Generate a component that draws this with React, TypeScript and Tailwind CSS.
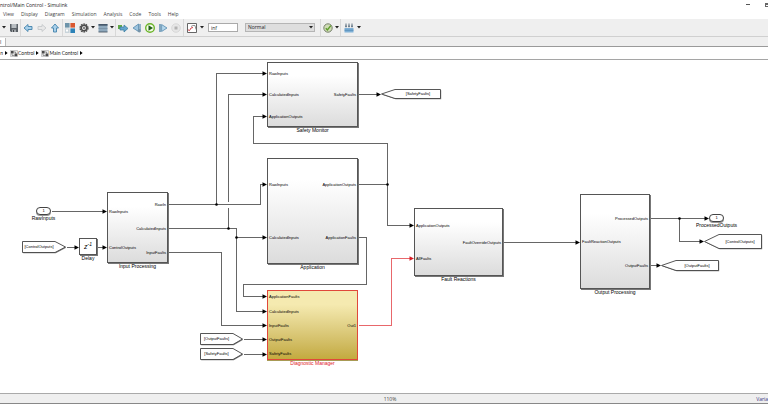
import React from 'react';

type Port = { name: string; y: number };

type Block = {
  name: string;
  x: number;
  y: number;
  w: number;
  h: number;
  inputs: Port[];
  outputs: Port[];
  selected?: boolean;
};

type Tag = {
  name: string;
  x: number;
  y: number;
  w: number;
  h: number;
  tip: number;
  side: 'left' | 'right';
};

const blocks: Block[] = [
  {
    name: 'Input Processing', x: 107, y: 132, w: 61, h: 71,
    inputs: [{ name: 'RawInputs', y: 151 }, { name: 'ControlOutputs', y: 187 }],
    outputs: [{ name: 'RawIn', y: 144 }, { name: 'CalculatedInputs', y: 168 }, { name: 'InputFaults', y: 192 }],
  },
  {
    name: 'Safety Monitor', x: 267, y: 2, w: 91, h: 65,
    inputs: [{ name: 'RawInputs', y: 13 }, { name: 'CalculatedInputs', y: 34 }, { name: 'ApplicationOutputs', y: 56 }],
    outputs: [{ name: 'SafetyFaults', y: 34 }],
  },
  {
    name: 'Application', x: 267, y: 98, w: 91, h: 106,
    inputs: [{ name: 'RawInputs', y: 124 }, { name: 'CalculatedInputs', y: 177 }],
    outputs: [{ name: 'ApplicationOutputs', y: 124 }, { name: 'ApplicationFaults', y: 177 }],
  },
  {
    name: 'Diagnostic Manager', x: 267, y: 230, w: 91, h: 70, selected: true,
    inputs: [
      { name: 'ApplicationFaults', y: 236 },
      { name: 'CalculatedInputs', y: 251 },
      { name: 'InputFaults', y: 265 },
      { name: 'OutputFaults', y: 279 },
      { name: 'SafetyFaults', y: 293 },
    ],
    outputs: [{ name: 'Out1', y: 265 }],
  },
  {
    name: 'Fault Reactions', x: 414, y: 148, w: 89, h: 68,
    inputs: [{ name: 'ApplicationOutputs', y: 165 }, { name: 'AllFaults', y: 198 }],
    outputs: [{ name: 'FaultOverrideOutputs', y: 182 }],
  },
  {
    name: 'Output Processing', x: 580, y: 134, w: 70, h: 95,
    inputs: [{ name: 'FaultReactionOutputs', y: 181 }],
    outputs: [{ name: 'ProcessedOutputs', y: 158 }, { name: 'OutputFaults', y: 205 }],
  },
];

const tags: Tag[] = [
  { name: '[ControlOutputs]', x: 22, y: 181, w: 44, h: 12, tip: 11, side: 'right' },
  { name: '[OutputFaults]', x: 200, y: 273, w: 43, h: 12, tip: 10, side: 'right' },
  { name: '[SafetyFaults]', x: 200, y: 288, w: 43, h: 12, tip: 10, side: 'right' },
  { name: '[SafetyFaults]', x: 381, y: 29, w: 60, h: 10, tip: 14, side: 'left' },
  { name: '[ControlOutputs]', x: 704, y: 174, w: 58, h: 15, tip: 15, side: 'left' },
  { name: '[OutputFaults]', x: 661, y: 200, w: 58, h: 11, tip: 15, side: 'left' },
];

const wires = [
  'M51 151H104',
  'M66 187H76',
  'M97 187H104',
  'M168 144H260V124H264',
  'M216 144V13H264',
  'M168 168H236V251H264',
  'M228 168V147M228 141V34H264',
  'M236 177H264',
  'M168 192H221V265H264',
  'M243 279H264',
  'M243 294H264',
  'M358 34H378',
  'M358 124H387V165H411',
  'M387 124V83H253V56H264',
  'M358 177H366V224H243V236H264',
  'M503 182H577',
  'M650 158H706',
  'M679 158V181H701',
  'M650 205H658',
];

// tips of the arrow heads, all of them point right
const arrows = [
  [107, 151], [79, 187], [107, 187], [267, 124], [267, 13], [267, 251], [267, 34], [267, 177],
  [267, 265], [267, 279], [267, 294], [381, 34], [414, 165], [267, 56], [267, 236], [580, 182],
  [709, 158], [704, 181], [661, 205],
];

const junctions = [[216, 144], [228, 168], [236, 177], [387, 124], [679, 158]];

function Arrow({ x, y, className }: { x: number; y: number; className: string }) {
  return <path d={`M${x} ${y + 0.5}l-4.5 -2.2v4.4z`} className={className} />;
}

function Wires() {
  return (
    <svg className="absolute inset-0 h-full w-full" aria-hidden="true">
      <g transform="translate(0.5 0.5)" fill="none" strokeWidth="1" shapeRendering="crispEdges">
        {wires.map((d) => (
          <path key={d} d={d} className="stroke-[#666666]" />
        ))}
        <path d="M358 265H391V198H411" className="stroke-[#e8676b]" />
      </g>
      {arrows.map(([x, y]) => (
        <Arrow key={`${x}-${y}`} x={x} y={y} className="fill-black" />
      ))}
      <Arrow x={414} y={198} className="fill-[#d81e26]" />
      {junctions.map(([x, y]) => (
        <circle key={`${x}-${y}`} cx={x + 0.5} cy={y + 0.5} r="1.3" className="fill-black" />
      ))}
    </svg>
  );
}

function BlockNode({ block }: { block: Block }) {
  const { name, x, y, w, h, inputs, outputs, selected } = block;
  const look = selected
    ? 'border-[#e0483a] bg-linear-to-b from-[#f5eab0] from-20% to-[#c3aa3e] shadow-[0_1px_0_#a89a55]'
    : 'border-[#555555] bg-linear-to-b from-white from-20% to-[#dcdcdc] shadow-[1px_1px_0_#777777]';

  return (
    <div className="absolute" style={{ left: x, top: y, width: w, height: h }}>
      <div className={`h-full w-full border ${look}`} />
      {inputs.map((port) => (
        <span
          key={port.name}
          className="absolute left-[2px] -translate-y-1/2 text-[4px] leading-[6px] whitespace-nowrap"
          style={{ top: port.y - y + 1 }}
        >
          {port.name}
        </span>
      ))}
      {outputs.map((port) => (
        <span
          key={port.name}
          className="absolute right-[2px] -translate-y-1/2 text-[4px] leading-[6px] whitespace-nowrap"
          style={{ top: port.y - y + 1 }}
        >
          {port.name}
        </span>
      ))}
      <div className={`flex justify-center text-[5px] leading-[7px] whitespace-nowrap ${selected ? 'text-[#e02028]' : ''}`}>
        {name}
      </div>
    </div>
  );
}

function TagNode({ tag }: { tag: Tag }) {
  const { name, x, y, w, h, tip, side } = tag;
  const points =
    side === 'right'
      ? `0.5,0.5 ${w - tip},0.5 ${w - 0.5},${h / 2} ${w - tip},${h - 0.5} 0.5,${h - 0.5}`
      : `${w - 0.5},0.5 ${tip},0.5 0.5,${h / 2} ${tip},${h - 0.5} ${w - 0.5},${h - 0.5}`;

  return (
    <div
      className={`absolute flex items-center justify-center text-[4px] leading-[6px] whitespace-nowrap ${
        side === 'right' ? 'pr-[10px]' : 'pl-[14px]'
      }`}
      style={{ left: x, top: y, width: w, height: h }}
    >
      <svg className="absolute inset-0 h-full w-full overflow-visible" aria-hidden="true">
        <polygon points={points} transform="translate(0.7 0.7)" className="fill-[#777777]" />
        <polygon points={points} className="fill-white stroke-[#444444]" strokeWidth="0.9" />
      </svg>
      <span className="relative">{name}</span>
    </div>
  );
}

function PortNode({ name, x, y }: { name: string; x: number; y: number }) {
  return (
    <div className="absolute flex w-[15px] flex-col items-center" style={{ left: x, top: y }}>
      <div className="h-[8px] w-full rounded-full border border-[#444444] bg-white text-center text-[4px] leading-[6px] shadow-[0_1px_0_#999999]">
        1
      </div>
      <span className="text-[5px] leading-[7px] whitespace-nowrap">{name}</span>
    </div>
  );
}

function Caret() {
  return (
    <svg viewBox="0 0 4 3" className="h-[3px] w-[4px] shrink-0 fill-[#222222]" aria-hidden="true">
      <path d="M0 0h4l-2 2.5z" />
    </svg>
  );
}

function Tool({ label, className, children }: { label: string; className: string; children: React.ReactNode }) {
  return (
    <button type="button" aria-label={label} className={`flex h-full shrink-0 items-center justify-center ${className}`}>
      {children}
    </button>
  );
}

function Icon({ children }: { children: React.ReactNode }) {
  return (
    <svg viewBox="0 0 10 10" className="h-[10px] w-[10px] shrink-0" fill="none" aria-hidden="true">
      {children}
    </svg>
  );
}

function Divider() {
  return <div className="h-full w-px shrink-0 bg-[#d8d8d8]" />;
}

function Toolbar() {
  return (
    <div className="flex h-[18px] items-center overflow-hidden border-b border-[#d0d0d0] bg-[#efefef]">
      <Tool label="New model options" className="w-[7px]">
        <Caret />
      </Tool>
      <Tool label="Save" className="w-[13px]">
        <Icon>
          <path d="M1 1h8v8H2L1 8z" fill="#5c6268" />
          <path d="M2.5 1h5v4h-5z" fill="#b9bec2" />
          <path d="M3 6.5h4V9H3z" fill="#a0a4a8" />
          <path d="M4 7h1v2H4z" fill="#44484c" />
        </Icon>
      </Tool>
      <Divider />
      <Tool label="Back" className="w-[14px]">
        <Icon>
          <path d="M1 5l4-3.5v2h4v3H5v2z" fill="#a9d0ea" stroke="#4483ad" strokeWidth="0.9" />
        </Icon>
      </Tool>
      <Tool label="Forward" className="w-[13px]">
        <Icon>
          <path d="M9 5L5 1.5v2H1v3h4v2z" fill="#e8e8e8" stroke="#c2c5c8" strokeWidth="0.8" />
        </Icon>
      </Tool>
      <Tool label="Up to parent" className="w-[14px]">
        <Icon>
          <path d="M5 1L1.5 5h2v4h3V5h2z" fill="#a9d0ea" stroke="#4483ad" strokeWidth="0.9" />
        </Icon>
      </Tool>
      <Divider />
      <Tool label="Library browser" className="w-[14px]">
        <Icon>
          <path d="M0 0h4.6v4.6H0z" fill="#6d94aa" />
          <path d="M5.4 0H10v4.6H5.4z" fill="#d9572f" />
          <path d="M0 5.4h4.6V10H0z" fill="#c9d4da" />
          <path d="M5.4 5.4H10V10H5.4z" fill="#2c82b7" />
          <path d="M1 6.5h2v2H1z" fill="#ffffff" />
        </Icon>
      </Tool>
      <Tool label="Model configuration" className="w-[13px]">
        <Icon>
          <circle cx="5" cy="5" r="3.9" stroke="#4a4a4a" strokeWidth="1.4" strokeDasharray="1.7 0.75" />
          <circle cx="5" cy="5" r="2.7" fill="#dcdcdc" stroke="#4a4a4a" strokeWidth="1.4" />
          <circle cx="5" cy="5" r="1" fill="#666666" />
        </Icon>
      </Tool>
      <Tool label="Configuration options" className="w-[6px]">
        <Caret />
      </Tool>
      <Tool label="Model explorer" className="w-[13px]">
        <Icon>
          <path d="M0.5 1h9v8h-9z" fill="#8fa9bd" />
          <path d="M0.5 1h9v1.7h-9z" fill="#46586b" />
          <path d="M0.5 5.5h9" stroke="#6d879b" strokeWidth="0.6" />
          <path d="M0.5 9h9" stroke="#3c4a56" strokeWidth="0.8" />
        </Icon>
      </Tool>
      <Tool label="Explorer options" className="w-[6px]">
        <Caret />
      </Tool>
      <Divider />
      <Tool label="Fast restart" className="w-[14px]">
        <Icon>
          <path d="M0 2h4v4H0z" fill="#62a945" />
          <path d="M2 4h4V2l4 3.4L6 9V7H2z" fill="#64a5cd" stroke="#34789f" strokeWidth="0.7" />
        </Icon>
      </Tool>
      <Tool label="Step back" className="w-[13px]">
        <Icon>
          <path d="M6.5 1v7.5L1 5z" fill="#9fc5df" stroke="#5489ad" strokeWidth="0.8" />
          <path d="M8 1v6" stroke="#5489ad" strokeWidth="1.2" />
          <circle cx="7.3" cy="7.7" r="1.7" fill="#7594a9" />
        </Icon>
      </Tool>
      <Tool label="Run" className="w-[13px]">
        <Icon>
          <circle cx="5" cy="5" r="4.3" fill="#f4fbe9" stroke="#6cb52a" strokeWidth="1.4" />
          <path d="M3.5 2.3L8 5 3.5 7.7z" fill="#1f5f18" />
        </Icon>
      </Tool>
      <Tool label="Step forward" className="w-[13px]">
        <Icon>
          <path d="M2 1v8" stroke="#5489ad" strokeWidth="1.4" />
          <path d="M3.6 1.5L9 5 3.6 8.5z" fill="#b5d6eb" stroke="#5489ad" strokeWidth="0.8" />
        </Icon>
      </Tool>
      <Tool label="Stop" className="w-[14px]">
        <Icon>
          <circle cx="5" cy="5" r="4.3" fill="#e6e6e6" stroke="#d2d2d2" strokeWidth="0.8" />
          <path d="M3.5 3.5h3v3h-3z" fill="#b2b2b2" />
        </Icon>
      </Tool>
      <Divider />
      <Tool label="Data inspector" className="w-[16px]">
        <Icon>
          <path d="M0.5 0.5h9v9h-9z" fill="#ffffff" stroke="#555555" strokeWidth="0.9" />
          <path d="M1 6.8l1.5 0.8L4 5l2-0.5" stroke="#d4434a" strokeWidth="1" />
          <path d="M4 3.5L6 2.5h2l1 4" stroke="#777777" strokeWidth="0.8" />
        </Icon>
      </Tool>
      <Tool label="Inspector options" className="mr-[4px] w-[4px]">
        <Caret />
      </Tool>
      <input
        aria-label="Simulation stop time"
        defaultValue="inf"
        className="h-[9px] w-[30px] shrink-0 border border-[#aaaaaa] bg-white px-[2px] text-[5px] leading-[7px]"
      />
      <div className="relative mr-[5px] ml-[7px] flex shrink-0 items-center">
        <select
          aria-label="Simulation mode"
          className="h-[9px] w-[70px] appearance-none border border-[#b5b5b5] bg-[#dedede] px-[2px] text-[5px] leading-[7px]"
        >
          <option>Normal</option>
          <option>Accelerator</option>
        </select>
        <span className="pointer-events-none absolute right-[2px]">
          <Caret />
        </span>
      </div>
      <Divider />
      <Tool label="Model advisor" className="w-[13px]">
        <Icon>
          <circle cx="5" cy="5" r="4.2" fill="#cfdcb5" stroke="#77806c" strokeWidth="1" />
          <path d="M2.8 5.2l1.6 1.7L7.8 2.6" stroke="#5c9c29" strokeWidth="1.4" />
        </Icon>
      </Tool>
      <Tool label="Advisor options" className="w-[6px]">
        <Caret />
      </Tool>
      <Divider />
      <Tool label="Build model" className="w-[15px]">
        <Icon>
          <path d="M0.5 5h9v4.5h-9z" fill="#7fb0d6" />
          <path d="M0.5 7.2h9" stroke="#467fae" strokeWidth="0.7" />
          <path d="M2 0.5v3.8M5 0.5v3.8M8 0.5v3.8" stroke="#3d5468" strokeWidth="0.8" />
          <path d="M1 2.7l1 1.6 1-1.6zM4 2.7l1 1.6 1-1.6zM7 2.7l1 1.6 1-1.6z" fill="#3d5468" />
        </Icon>
      </Tool>
      <Tool label="Build options" className="w-[6px]">
        <Caret />
      </Tool>
    </div>
  );
}

function Chevron() {
  return (
    <svg viewBox="0 0 3 4" className="h-[4px] w-[3px] shrink-0 fill-black" aria-hidden="true">
      <path d="M0 0l2.6 2-2.6 2z" />
    </svg>
  );
}

function ModelIcon() {
  return (
    <svg viewBox="0 0 8 7" className="h-[7px] w-[8px] shrink-0" fill="none" aria-hidden="true">
      <path d="M0.5 0.5h7v6h-7z" fill="#f2f2f2" stroke="#aaaaaa" strokeWidth="0.6" />
      <path d="M1 1h2.6v2.6H1zM4.6 3.6h2.6v2.6H4.6z" fill="#4a4a4a" />
      <path d="M3.6 2h2v1.6M2 3.6v1.8h2.6" stroke="#666666" strokeWidth="0.7" />
    </svg>
  );
}

function Breadcrumb() {
  return (
    <nav
      aria-label="Model path"
      className="flex h-[13px] items-center gap-[2px] border-b border-[#a5a5a5] bg-white font-['Lato',sans-serif] text-[5px] leading-[8px]"
    >
      <a href="#model" className="w-[3px] overflow-hidden" dir="rtl">
        n
      </a>
      <Chevron />
      <a href="#control" className="flex items-center">
        <ModelIcon />
        Control
      </a>
      <Chevron />
      <a href="#main-control" className="flex items-center">
        <ModelIcon />
        Main Control
      </a>
      <Chevron />
    </nav>
  );
}

const menus = ['View', 'Display', 'Diagram', 'Simulation', 'Analysis', 'Code', 'Tools', 'Help'];

export default function App() {
  return (
    <div className="flex min-h-screen flex-col overflow-hidden bg-white font-['Open_Sans',sans-serif] text-[#222222]">
      <header className="flex h-[9px] items-center justify-between overflow-hidden">
        <h1 className="text-[5px] leading-[8px] whitespace-nowrap">ntrol/Main Control - Simulink</h1>
        <div className="flex items-center gap-[15px]">
          <button type="button" aria-label="Minimize" className="h-px w-[4px] bg-[#555555]" />
          <button type="button" aria-label="Restore" className="h-[4px] w-[3px] border border-r-0 border-t-2 border-[#666666]" />
        </div>
      </header>
      <nav aria-label="Menu" className="flex h-[10px] items-center gap-[7px] pl-[3px] text-[5px] leading-[8px] text-[#444444]">
        {menus.map((menu) => (
          <button key={menu} type="button">
            {menu}
          </button>
        ))}
      </nav>
      <Toolbar />
      <div className="flex h-[10px] items-end border-b border-[#9a9a9a] bg-[#efefef]">
        <button type="button" className="h-[8px] w-[6px] border-r border-[#bbbbbb] bg-white text-left text-[5px] leading-[7px]">
          l
        </button>
      </div>
      <Breadcrumb />
      <main className="relative min-h-[333px] flex-1 overflow-hidden font-['Liberation_Sans',sans-serif] text-black">
        <Wires />
        {blocks.map((block) => (
          <BlockNode key={block.name} block={block} />
        ))}
        {tags.map((tag) => (
          <TagNode key={`${tag.name}-${tag.side}`} tag={tag} />
        ))}
        <PortNode name="RawInputs" x={36} y={147} />
        <PortNode name="ProcessedOutputs" x={709} y={154} />
        <div className="absolute top-[178px] left-[79px] flex w-[18px] flex-col items-center">
          <div className="flex h-[17px] w-full items-center justify-center border border-[#555555] bg-white text-[7px] leading-[8px] italic shadow-[1px_1px_0_#777777]">
            z<sup className="text-[5px]">-1</sup>
          </div>
          <span className="text-[5px] leading-[7px]">Delay</span>
        </div>
      </main>
      <footer className="grid h-[11px] grid-cols-3 items-center overflow-hidden border-t border-b border-t-[#aaaaaa] border-b-[#888888] bg-[#efefef] text-[5px] leading-[8px] text-[#444444]">
        <span className="col-start-2 pl-[12px] text-center">110%</span>
        <a href="#variables" className="text-right text-[#343480]">
          Varia
        </a>
      </footer>
    </div>
  );
}
